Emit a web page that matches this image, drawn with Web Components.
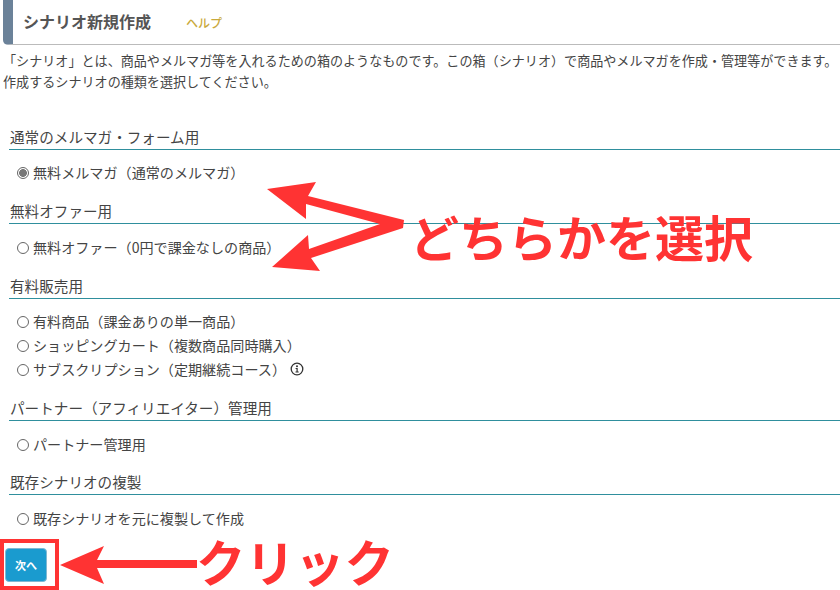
<!DOCTYPE html>
<html lang="ja">
<head>
<meta charset="utf-8">
<title>シナリオ新規作成</title>
<style>
  html, body { margin: 0; padding: 0; background: #fff; }
  body {
    width: 840px;
    height: 590px;
    overflow: hidden;
    font-family: "Noto Sans CJK JP", "Noto Sans", sans-serif;
    color: #444;
  }
</style>
</head>
<body>
<scenario-page>
  <page-title slot="title" help="ヘルプ">シナリオ新規作成</page-title>
  <span slot="intro">「シナリオ」とは、商品やメルマガ等を入れるための箱のようなものです。この箱（シナリオ）で商品やメルマガを作成・管理等ができます。<br>作成するシナリオの種類を選択してください。</span>

  <option-group heading="通常のメルマガ・フォーム用" style="--pad:12px;--after:17px">
    <radio-option checked>無料メルマガ（通常のメルマガ）</radio-option>
  </option-group>
  <option-group heading="無料オファー用" style="--after:17px">
    <radio-option>無料オファー（0円で課金なしの商品）</radio-option>
  </option-group>
  <option-group heading="有料販売用" style="--pad:12px;--after:17px">
    <radio-option>有料商品（課金ありの単一商品）</radio-option>
    <radio-option>ショッピングカート（複数商品同時購入）</radio-option>
    <radio-option info>サブスクリプション（定期継続コース）</radio-option>
  </option-group>
  <option-group heading="パートナー（アフィリエイター）管理用" style="--after:16px">
    <radio-option>パートナー管理用</radio-option>
  </option-group>
  <option-group heading="既存シナリオの複製" style="--after:0px">
    <radio-option>既存シナリオを元に複製して作成</radio-option>
  </option-group>

  <next-button>次へ</next-button>
  <red-notes></red-notes>
</scenario-page>

<script>
class ScenarioPage extends HTMLElement {
  constructor() {
    super();
    this.attachShadow({ mode: 'open' });
    this.shadowRoot.innerHTML = `
      <style>
        :host { display: block; position: relative; width: 840px; height: 590px; overflow: hidden; }
        .intro { margin: 5px 0 0 3px; font-size: 13.08px; line-height: 21px; white-space: nowrap; color: #444; }
        .groups { margin-top: 33px; padding-left: 9px; display: flex; flex-direction: column; }
      </style>
      <slot name="title"></slot>
      <div class="intro"><slot name="intro"></slot></div>
      <div class="groups"><slot></slot></div>
    `;
  }
}

class PageTitle extends HTMLElement {
  constructor() {
    super();
    this.attachShadow({ mode: 'open' });
  }
  connectedCallback() {
    const help = this.getAttribute('help') || '';
    this.shadowRoot.innerHTML = `
      <style>
        :host { display: flex; align-items: center; height: 45px; box-sizing: border-box; margin-left: 3px; border-left: 10px solid #6b8299; border-bottom: 1px solid #bbb; border-radius: 0 0 0 5px; padding-left: 10px; }
        .title { font-size: 16px; font-weight: 700; color: #555; margin-top: -2px; }
        .help { font-size: 12px; font-weight: 500; color: #c9a93c; margin-left: 35px; }
      </style>
      <span class="title"><slot></slot></span>
      <span class="help">${help}</span>
    `;
  }
}

class OptionGroup extends HTMLElement {
  constructor() {
    super();
    this.attachShadow({ mode: 'open' });
  }
  connectedCallback() {
    const heading = this.getAttribute('heading') || '';
    this.shadowRoot.innerHTML = `
      <style>
        :host { display: block; margin-bottom: var(--after, 16px); }
        h3 { margin: 0; height: 24px; line-height: 23px; padding-left: 1px; font-size: 14.6px; font-weight: 400; color: #444; border-bottom: 1px solid #2f8f9d; box-sizing: content-box; white-space: nowrap; }
        .rows { padding: var(--pad, 13px) 0 0 8px; display: flex; flex-direction: column; gap: 4px; }
      </style>
      <h3>${heading}</h3>
      <div class="rows"><slot></slot></div>
    `;
  }
}

class RadioOption extends HTMLElement {
  constructor() {
    super();
    this.attachShadow({ mode: 'open' });
  }
  connectedCallback() {
    const checked = this.hasAttribute('checked') ? 'checked' : '';
    const info = this.hasAttribute('info') ? `
      <svg class="info" viewBox="0 0 14 14" width="14" height="14" aria-hidden="true">
        <circle cx="7" cy="7" r="5.8" fill="none" stroke="#333" stroke-width="1.3"/>
        <circle cx="7" cy="4.2" r="1" fill="#333"/>
        <path d="M5.6 6h2.1v3.6h1v1H5.5v-1h1V7h-.9z" fill="#333"/>
      </svg>` : '';
    this.shadowRoot.innerHTML = `
      <style>
        :host { display: block; height: 20px; }
        label { display: flex; align-items: center; height: 20px; font-size: 14.1px; color: #444; white-space: nowrap; }
        input { appearance: none; -webkit-appearance: none; margin: 1px 4px 0 0; width: 12px; height: 12px; border: 1px solid #666; border-radius: 50%; box-sizing: border-box; background: #fff; flex: none; }
        input:checked { background: radial-gradient(circle, #777 0 3.6px, #fff 4.2px); }
        .info { margin-left: 4px; flex: none; }
      </style>
      <label><input type="radio" ${checked} name="scenario"><slot></slot>${info}</label>
    `;
  }
}

class NextButton extends HTMLElement {
  constructor() {
    super();
    this.attachShadow({ mode: 'open' });
    this.shadowRoot.innerHTML = `
      <style>
        :host { display: block; position: absolute; left: 5px; top: 548px; }
        button { display: block; width: 42px; height: 34px; padding: 0; border: 1px solid #7fb8d2; border-radius: 4px; background: #1a9bcf; color: #fff; font: 700 11px "Noto Sans CJK JP", sans-serif; }
      </style>
      <button type="button"><slot></slot></button>
    `;
  }
}

// 赤い注釈（矢印・枠・文字）はスクリーンショットの上に載っているもの
class RedNotes extends HTMLElement {
  constructor() {
    super();
    this.attachShadow({ mode: 'open' });
    this.shadowRoot.innerHTML = `
      <style>
        :host { position: absolute; inset: 0; display: block; pointer-events: none; }
        svg { position: absolute; left: 0; top: 0; }
        .note { position: absolute; font: 700 49px/1 "Noto Sans CJK JP", sans-serif; color: #ff3333; white-space: nowrap; }
        .pick { left: 410px; top: 211px; }
        .click { left: 196px; top: 536px; font-size: 49.5px; }
      </style>
      <svg width="840" height="590" viewBox="0 0 840 590" aria-hidden="true">
        <rect x="2" y="541" width="55" height="47" fill="none" stroke="#ff3333" stroke-width="4"/>
        <g fill="#ff3333">
          <path d="M267 189L316 182L308 196L404 220L403 228L311 258L320 271L272 267L308 235L309 249L380 224L306 204L306 219Z"/>
          <path d="M60 565L104 546L97 560H197V568H97L104 584Z"/>
        </g>
      </svg>
      <span class="note pick">どちらかを選択</span>
      <span class="note click">クリック</span>
    `;
  }
}

customElements.define('scenario-page', ScenarioPage);
customElements.define('page-title', PageTitle);
customElements.define('option-group', OptionGroup);
customElements.define('radio-option', RadioOption);
customElements.define('next-button', NextButton);
customElements.define('red-notes', RedNotes);
</script>
</body>
</html>
